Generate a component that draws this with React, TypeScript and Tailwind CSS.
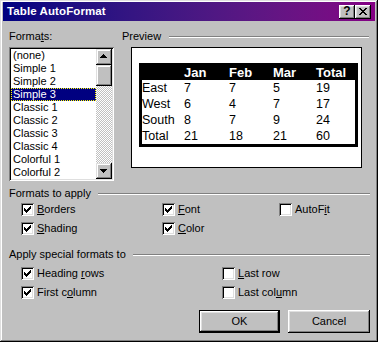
import React from "react";

const raised =
  "shadow-[inset_-1px_-1px_#000,inset_1px_1px_#fff,inset_-2px_-2px_#808080,inset_2px_2px_#dfdfdf]";
const scrollRaised =
  "shadow-[inset_-1px_-1px_#000,inset_1px_1px_#dfdfdf,inset_-2px_-2px_#808080,inset_2px_2px_#fff]";
const sunken =
  "shadow-[inset_1px_1px_#808080,inset_-1px_-1px_#fff,inset_2px_2px_#000,inset_-2px_-2px_#dfdfdf]";

function Check({ checked }: { checked: boolean }) {
  return (
    <div className={`w-[13px] h-[13px] shrink-0 bg-white ${sunken}`}>
      {checked && (
        <svg width="13" height="13" viewBox="0 0 13 13" shapeRendering="crispEdges">
          <path
            fill="#000"
            d="M9 3h1v1h-1z M8 4h2v1h-2z M3 5h1v1h-1z M7 5h3v1h-3z M3 6h2v1h-2z M6 6h3v1h-3z M3 7h5v1h-5z M4 8h3v1h-3z M5 9h1v1h-1z"
          />
        </svg>
      )}
    </div>
  );
}

function CheckItem({ checked, children }: { checked: boolean; children: React.ReactNode }) {
  return (
    <div className="flex items-center h-[13px]">
      <Check checked={checked} />
      <span className="ml-[3px] leading-[13px] whitespace-nowrap">{children}</span>
    </div>
  );
}

function GroupHeader({ children }: { children: React.ReactNode }) {
  return (
    <div className="flex items-center h-[13px]">
      <span className="leading-[13px] whitespace-nowrap">{children}</span>
      <div className="flex-1 ml-[7px] h-[2px] border-t border-t-[#808080] border-b border-b-white" />
    </div>
  );
}

const items = [
  "(none)",
  "Simple 1",
  "Simple 2",
  "Simple 3",
  "Classic 1",
  "Classic 2",
  "Classic 3",
  "Classic 4",
  "Colorful 1",
  "Colorful 2",
];

const rows = [
  ["East", "7", "7", "5", "19"],
  ["West", "6", "4", "7", "17"],
  ["South", "8", "7", "9", "24"],
  ["Total", "21", "18", "21", "60"],
];

export default function App() {
  return (
    <div
      className={`w-[378px] h-[342px] bg-[#c0c0c0] flex flex-col pt-[2px] px-[3px] pb-[3px] font-['Liberation_Sans',Arial,sans-serif] text-[11px] leading-[13px] text-black ${scrollRaised}`}
    >
      {/* Title bar */}
      <div className="h-[19px] shrink-0 flex items-center bg-linear-to-r from-[#000080] to-[#840084] pl-[4px]">
        <span className="flex-1 text-white font-bold text-[11.5px] tracking-[0.1px]">Table AutoFormat</span>
        <div className="flex mr-[4px]">
          <div className={`w-[16px] h-[14px] bg-[#c0c0c0] flex items-center justify-center ${raised}`}>
            <span className="font-bold text-[12px] leading-[12px] mt-[-1px]">?</span>
          </div>
          <div className={`w-[16px] h-[14px] bg-[#c0c0c0] ${raised}`}>
            <svg width="16" height="14" viewBox="0 0 16 14" shapeRendering="crispEdges">
              <path
                fill="#000"
                d="M4 3h2v1h-2z M10 3h2v1h-2z M5 4h2v1h-2z M9 4h2v1h-2z M6 5h4v1h-4z M7 6h2v1h-2z M6 7h4v1h-4z M5 8h2v1h-2z M9 8h2v1h-2z M4 9h2v1h-2z M10 9h2v1h-2z"
              />
            </svg>
          </div>
        </div>
      </div>

      {/* Body */}
      <div className="flex-1 flex flex-col pl-[6px] pr-[5px] pt-[9px]">
        <div className="flex">
          {/* Formats list */}
          <div className="flex flex-col w-[105px] shrink-0">
            <div className="h-[13px]">
              Forma<span className="underline">t</span>s:
            </div>
            <div className={`mt-[4px] h-[134px] bg-white p-[2px] flex ${sunken}`}>
              <div className="flex-1 flex flex-col">
                {items.map((it, i) => (
                  <div
                    key={it}
                    className={
                      i === 3
                        ? "h-[13px] leading-[13px] pl-[2px] bg-[#000080] text-white outline-1 outline-dotted outline-[#ffff00] -outline-offset-1"
                        : "h-[13px] leading-[13px] pl-[2px]"
                    }
                  >
                    {it}
                  </div>
                ))}
              </div>
              <div className="w-[16px] flex flex-col">
                <div className={`w-[16px] h-[16px] bg-[#c0c0c0] ${scrollRaised}`}>
                  <svg width="16" height="16" viewBox="0 0 16 16" shapeRendering="crispEdges">
                    <path fill="#000" d="M7 5h1v1h-1z M6 6h3v1h-3z M5 7h5v1h-5z M4 8h7v1h-7z" />
                  </svg>
                </div>
                <div className={`w-[16px] h-[21px] bg-[#c0c0c0] ${scrollRaised}`} />
                <div className="flex-1 bg-[conic-gradient(#c0c0c0_25%,#fff_0_50%,#c0c0c0_0_75%,#fff_0)] bg-size-[2px_2px]" />
                <div className={`w-[16px] h-[16px] bg-[#c0c0c0] ${scrollRaised}`}>
                  <svg width="16" height="16" viewBox="0 0 16 16" shapeRendering="crispEdges">
                    <path fill="#000" d="M4 6h7v1h-7z M5 7h5v1h-5z M6 8h3v1h-3z M7 9h1v1h-1z" />
                  </svg>
                </div>
              </div>
            </div>
          </div>

          {/* Preview */}
          <div className="flex-1 flex flex-col ml-[8px]">
            <div className="flex items-center h-[13px] mr-[1px]">
              <span>Preview</span>
              <div className="flex-1 ml-[8px] h-[2px] border-t border-t-[#808080] border-b border-b-white" />
            </div>
            <div className="mt-[4px] ml-[9px] w-[231px] h-[121px] bg-white border border-black pt-[15px] pl-[7px]">
              <div className="w-[219px] border-[3px] border-black text-black">
                <div className="grid grid-cols-[42px_45px_44px_43px_1fr] h-[14px] bg-black text-white font-bold text-[13px] leading-[14px]">
                  <div />
                  <div>Jan</div>
                  <div>Feb</div>
                  <div>Mar</div>
                  <div>Total</div>
                </div>
                {rows.map((r) => (
                  <div
                    key={r[0]}
                    className="grid grid-cols-[42px_45px_44px_43px_1fr] h-[16px] text-[12.5px] leading-[16px]"
                  >
                    {r.map((c, j) => (
                      <div key={j}>{c}</div>
                    ))}
                  </div>
                ))}
              </div>
            </div>
          </div>
        </div>

        {/* Formats to apply */}
        <div className="mt-[6px]">
          <GroupHeader>Formats to apply</GroupHeader>
        </div>
        <div className="mt-[3px] pl-[12px] grid grid-cols-[141px_117px_1fr] gap-y-[6px]">
          <CheckItem checked>
            <span className="underline">B</span>orders
          </CheckItem>
          <CheckItem checked>
            <span className="underline">F</span>ont
          </CheckItem>
          <CheckItem checked={false}>
            AutoF<span className="underline">i</span>t
          </CheckItem>
          <CheckItem checked>
            <span className="underline">S</span>hading
          </CheckItem>
          <CheckItem checked>
            <span className="underline">C</span>olor
          </CheckItem>
          <div />
        </div>

        {/* Apply special formats to */}
        <div className="mt-[13px]">
          <GroupHeader>Apply special formats to</GroupHeader>
        </div>
        <div className="mt-[6px] pl-[12px] grid grid-cols-[201px_1fr] gap-y-[6px]">
          <CheckItem checked>
            Heading <span className="underline">r</span>ows
          </CheckItem>
          <CheckItem checked={false}>
            <span className="underline">L</span>ast row
          </CheckItem>
          <CheckItem checked>
            First c<span className="underline">o</span>lumn
          </CheckItem>
          <CheckItem checked={false}>
            Last col<span className="underline">u</span>mn
          </CheckItem>
        </div>

        {/* Buttons */}
        <div className="mt-[11px] flex justify-end gap-[8px]">
          <div className="w-[81px] h-[23px] border border-black">
            <div className={`w-full h-full bg-[#c0c0c0] flex items-center justify-center ${raised}`}>OK</div>
          </div>
          <div className={`w-[82px] h-[23px] bg-[#c0c0c0] flex items-center justify-center ${raised}`}>
            Cancel
          </div>
        </div>
      </div>
    </div>
  );
}
